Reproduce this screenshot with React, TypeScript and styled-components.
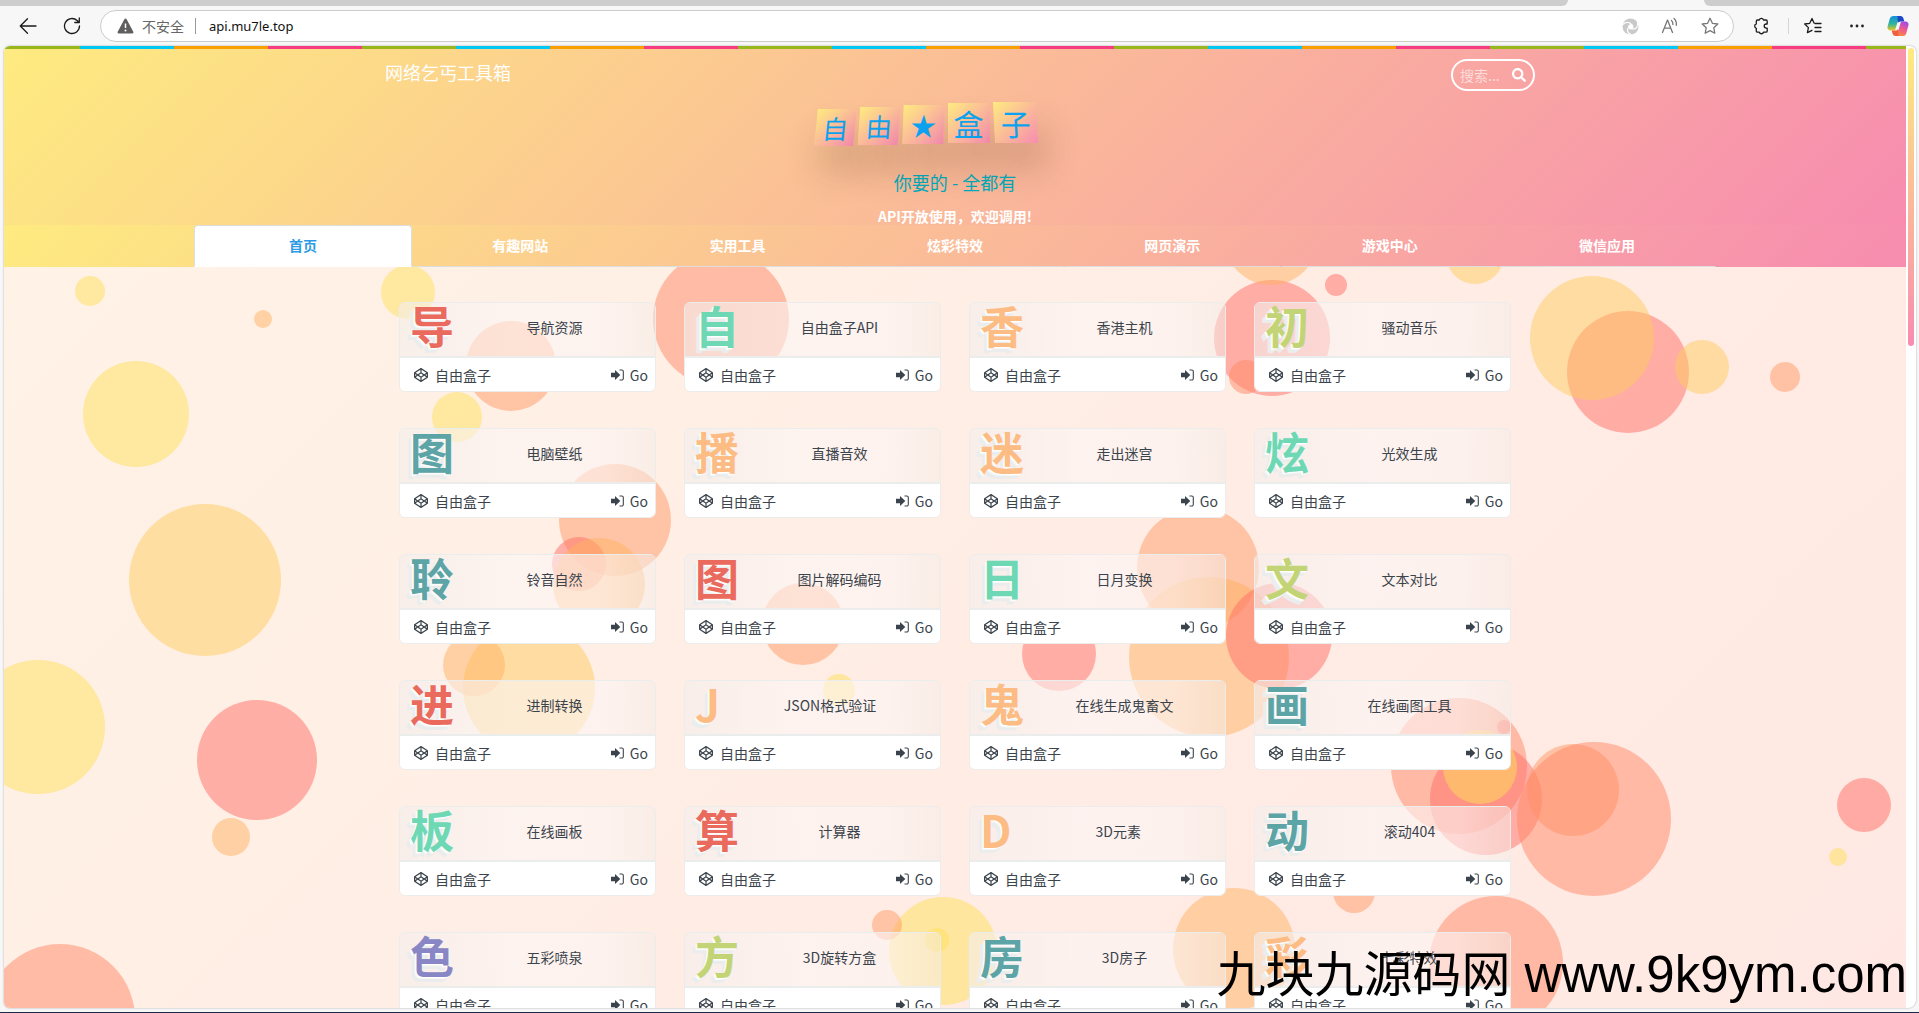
import React from "react";
import styled, { createGlobalStyle, css } from "styled-components";
import { FaSearch, FaCodepen } from "react-icons/fa";

const SANS = `"Noto Sans CJK SC", "Noto Sans", sans-serif`;
const warm = css`
  background: linear-gradient(135deg, #feeb80 0%, #f78cb0 100%);
`;

const Global = createGlobalStyle`
  *, *::before, *::after { box-sizing: border-box; }
  html, body, #root { height: 100%; }
  body { margin: 0; overflow: hidden; font-family: ${SANS}; font-size: 14px; }
  button, input { font: inherit; color: inherit; }
  a { color: inherit; text-decoration: none; }
`;

const Window = styled.div`
  height: 100vh;
  display: flex;
  flex-direction: column;
  background: #f7f7f7;
  border-bottom: 1px solid #1b2a4a;
`;

/* Browser frame */
const TabStrip = styled.div`
  flex: none;
  height: 6px;
  display: flex;
  justify-content: space-between;
`;
const InactiveTabs = styled.div<{ $side: "left" | "right" }>`
  background: #cdcdcd;
  ${(p) =>
    p.$side === "left"
      ? css`flex: 1; margin-right: 136px; border-bottom-right-radius: 6px;`
      : css`width: 215px; border-bottom-left-radius: 6px;`}
`;
const Toolbar = styled.div`
  flex: none;
  height: 40px;
  display: flex;
  align-items: center;
  padding: 0 0 0 12px;
  color: #1b1b1b;
`;
const ToolButton = styled.button<{ $w?: number }>`
  width: ${(p) => p.$w ?? 44}px;
  height: 32px;
  padding: 0;
  border: 0;
  background: none;
  display: flex;
  align-items: center;
  justify-content: center;
  flex: none;
`;
const AddressBar = styled.div`
  flex: 1;
  height: 32px;
  display: flex;
  align-items: center;
  padding: 0 3px 0 16px;
  background: #fff;
  border: 1px solid #ccc;
  border-radius: 16px;
  color: #666;
`;
const Insecure = styled.span`
  margin-left: 8px;
  padding-right: 11px;
  border-right: 1px solid #999;
  line-height: 16px;
`;
const Url = styled.input`
  flex: 1;
  min-width: 0;
  border: 0;
  outline: 0;
  margin-left: 11px;
  color: #111;
  background: none;
  font-family: "Noto Sans", ${SANS};
  font-size: 13px;
`;
const Divider = styled.span`
  width: 1px;
  height: 16px;
  background: #d5d5d5;
`;

/* Page */
const Viewport = styled.div`
  flex: 1;
  min-height: 0;
  display: flex;
  margin: 0 3px 4px 4px;
  background: #fff;
  border-radius: 6px 6px 8px 6px;
  overflow: hidden;
  box-shadow: 0 0 2px rgba(0, 0, 0, 0.35);
`;
const Page = styled.div`
  flex: 1;
  min-width: 0;
  position: relative;
  overflow: hidden;
  background: linear-gradient(135deg, #fff3e6 0%, #ffe8e3 100%);
`;
const Scrollbar = styled.div`
  width: 10px;
  padding: 2px 2px 0;
`;
const Thumb = styled.div`
  height: 298px;
  border-radius: 3px;
  background: linear-gradient(180deg, #feeb80, #f78cb0);
`;
const Backdrop = styled.svg`
  position: absolute;
  inset: 0;
  width: 100%;
  height: 100%;
`;
const Content = styled.div`
  position: relative;
`;
const Stripe = styled.div`
  height: 3px;
  background: linear-gradient(
      90deg,
      #97b71c 0 94px,
      #00c8f4 94px 188px,
      #f9a000 188px 282px,
      #f73c82 282px 376px
    )
    -18px 0 / 376px 3px;
`;
const Header = styled.header`
  ${warm}
  height: 176px;
`;
const HeaderTop = styled.div`
  max-width: 1160px;
  margin: 0 auto;
  padding-left: 10px;
  height: 42px;
  display: flex;
  justify-content: space-between;
  align-items: flex-end;
`;
const SiteName = styled.a`
  color: #fff;
  font-size: 18px;
  line-height: 38px;
`;
const SearchBox = styled.form`
  width: 84px;
  height: 32px;
  display: flex;
  align-items: center;
  justify-content: space-between;
  padding: 0 7px;
  border: 2px solid #fff;
  border-radius: 16px;
  color: #fff;
  input {
    width: 44px;
    padding: 0;
    border: 0;
    outline: 0;
    background: none;
  }
  input::placeholder { color: rgba(255, 255, 255, 0.6); opacity: 1; }
  button { border: 0; padding: 0; background: none; display: flex; }
`;
const Hero = styled.div`
  display: flex;
  flex-direction: column;
  align-items: center;
`;
const Logo = styled.div`
  height: 62px;
  padding: 11px 58px 0 0;
  display: flex;
  gap: 4px;
`;
const Tile = styled.span<{ $size: number; $font: number; $lean: number; $drop: number }>`
  width: ${(p) => p.$size + 2}px;
  height: ${(p) => p.$size}px;
  display: flex;
  align-items: center;
  justify-content: center;
  transform: translateY(${(p) => p.$drop}px) skewX(${(p) => p.$lean}deg);
  ${warm}
  box-shadow: 8px 26px 36px rgba(60, 30, 0, 0.2);
  color: #0ca2ee;
  font-size: ${(p) => p.$font}px;
  line-height: 1;
`;
const Slogan = styled.p`
  margin: 13px 0 0;
  color: #00acbe;
  font-size: 18px;
  line-height: 32px;
`;
const Notice = styled.p`
  margin: 8px 0 0;
  color: #fff;
  font-weight: 700;
  line-height: 20px;
`;
const Nav = styled.nav`
  ${warm}
  height: 42px;
  display: flex;
  justify-content: center;
`;
const NavLink = styled.a<{ $active?: boolean }>`
  width: calc(80% / 7);
  border: 1px solid transparent;
  border-bottom-color: #ddd;
  color: #fff;
  font-weight: 700;
  line-height: 38px;
  text-align: center;
  ${(p) =>
    p.$active &&
    css`
      background: #fff;
      color: #2c9be4;
      border-color: #ddd #ddd #fff;
      border-radius: 4px 4px 0 0;
    `}
`;
const Grid = styled.main`
  max-width: 1140px;
  margin: 0 auto;
  padding: 35px 14px 0;
  display: grid;
  grid-template-columns: repeat(4, 1fr);
  gap: 36px 28px;
`;
const Card = styled.a`
  height: 90px;
  display: flex;
  flex-direction: column;
  border: 1px solid #ebeded;
  border-radius: 6px;
  color: #3b444c;
`;
const CardHead = styled.div`
  flex: 1;
  display: flex;
  align-items: center;
  padding: 0 0 5px 10px;
  border-bottom: 2px solid #ebeded;
  border-radius: 5px 5px 0 0;
  background: linear-gradient(
    90deg,
    rgba(244, 238, 236, 0.6),
    rgba(252, 246, 246, 0.6) 45%,
    rgba(252, 245, 244, 0.6) 80%,
    rgba(244, 236, 232, 0.5)
  );
`;
const Initial = styled.b<{ $color: string }>`
  padding-bottom: 4px;
  color: ${(p) => p.$color};
  font-size: 44px;
  line-height: 44px;
  text-shadow: -1px 1px 0 #fff, -2px 2px 0 #f7f7f7, -4px 4px 0 #ebeded, -5px 5px 0 #ebeded;
`;
const CardTitle = styled.span`
  flex: 1;
  text-align: center;
`;
const CardFoot = styled.div`
  height: 33px;
  display: flex;
  align-items: center;
  gap: 7px;
  padding: 0 7px 0 14px;
  border-radius: 0 0 5px 5px;
  background: #fff;
`;
const Go = styled.span`
  margin-left: auto;
  display: flex;
  align-items: center;
  gap: 6px;
`;
const Watermark = styled.div`
  position: absolute;
  right: 12px;
  bottom: 2px;
  display: flex;
  align-items: baseline;
  gap: 14px;
  color: #000;
  font-size: 49px;
  line-height: 72px;
  white-space: nowrap;
  span + span {
    font-family: "Liberation Sans", Arial, sans-serif;
    font-size: 51px;
  }
`;

const RED = "#ff6e66", CORAL = "#ff8766", PEACH = "#ff9966", ORANGE = "#ffb262", AMBER = "#ffcb60", YELLOW = "#ffe05a";
const bubbles: [number, number, number, string][] = [
  [86, 245, 15, YELLOW], [259, 273, 9, ORANGE], [404, 246, 27, YELLOW], [132, 368, 53, YELLOW],
  [201, 534, 76, AMBER], [34, 681, 67, YELLOW], [253, 714, 60, RED], [227, 791, 19, ORANGE],
  [56, 973, 75, CORAL], [507, 320, 45, PEACH], [453, 371, 25, YELLOW], [717, 273, 68, CORAL],
  [611, 474, 56, PEACH], [575, 518, 27, RED], [595, 538, 46, ORANGE], [525, 642, 66, AMBER],
  [470, 619, 31, ORANGE], [799, 578, 41, PEACH], [835, 644, 16, YELLOW], [1268, 292, 58, RED],
  [1242, 331, 17, CORAL], [1267, 192, 47, ORANGE], [1332, 239, 11, RED], [1471, 209, 29, AMBER],
  [1624, 326, 61, RED], [1588, 292, 62, AMBER], [1698, 321, 27, AMBER], [1781, 331, 15, PEACH],
  [1194, 522, 61, PEACH], [1205, 611, 80, ORANGE], [1275, 590, 53, RED], [1055, 608, 37, RED],
  [1455, 720, 68, CORAL], [1482, 753, 56, RED], [1476, 721, 37, YELLOW], [1569, 744, 46, PEACH],
  [1590, 773, 77, CORAL], [1860, 759, 27, RED], [1834, 811, 9, YELLOW], [1500, 681, 7, RED],
  [939, 905, 54, YELLOW], [883, 879, 15, PEACH], [933, 894, 12, YELLOW], [1230, 903, 61, ORANGE],
  [1350, 846, 21, PEACH], [1492, 917, 67, CORAL],
];

const nav = ["首页", "有趣网站", "实用工具", "炫彩特效", "网页演示", "游戏中心", "微信应用"];

const tiles = [
  { ch: "自", size: 37, font: 26, lean: -6, drop: 7 },
  { ch: "由", size: 38, font: 26, lean: -4, drop: 5 },
  { ch: "★", size: 39, font: 26, lean: -2, drop: 3 },
  { ch: "盒", size: 40, font: 30, lean: 0, drop: 1 },
  { ch: "子", size: 41, font: 30, lean: 3, drop: 0 },
];

const C = { red: "#ea6a5d", green: "#6ed8b5", orange: "#fdbc83", lime: "#c3d477", teal: "#5da4a6", purple: "#8886c4" };
const cards: [string, string, string][] = [
  ["导", "导航资源", C.red], ["自", "自由盒子API", C.green], ["香", "香港主机", C.orange], ["初", "骚动音乐", C.lime],
  ["图", "电脑壁纸", C.teal], ["播", "直播音效", C.orange], ["迷", "走出迷宫", C.orange], ["炫", "光效生成", C.green],
  ["聆", "铃音自然", C.teal], ["图", "图片解码编码", C.red], ["日", "日月变换", C.green], ["文", "文本对比", C.lime],
  ["进", "进制转换", C.red], ["J", "JSON格式验证", C.orange], ["鬼", "在线生成鬼畜文", C.orange], ["画", "在线画图工具", C.teal],
  ["板", "在线画板", C.green], ["算", "计算器", C.red], ["D", "3D元素", C.orange], ["动", "滚动404", C.teal],
  ["色", "五彩喷泉", C.purple], ["方", "3D旋转方盒", C.lime], ["房", "3D房子", C.teal], ["彩", "七彩特效", C.orange],
];

const stroke = { fill: "none", stroke: "currentColor", strokeWidth: 1.3, strokeLinecap: "round", strokeLinejoin: "round" } as const;

const BackIcon = () => (
  <svg width="18" height="18" viewBox="0 0 18 18" {...stroke}><path d="M17 9H1.500M8.500 1.800L1.300 9l7.200 7.200" /></svg>
);
const ReloadIcon = () => (
  <svg width="18" height="18" viewBox="0 0 18 18" {...stroke}><path d="M16.500 9a7.500 7.500 0 1 1-2.400-5.500l1.900 1.800M16.300 1v4.500h-4.500" /></svg>
);
const WarnIcon = () => (
  <svg width="17" height="16" viewBox="0 0 17 16"><path d="M8.500 0.500c.5 0 .9.300 1.100.7l6.700 12.600c.4.800-.1 1.700-1 1.700H1.700c-.9 0-1.400-.9-1-1.700L7.400 1.200c.2-.4.600-.7 1.100-.7z" fill="#5f5f5f" /><path d="M8.500 5.500v4.500" stroke="#fff" strokeWidth="1.500" /><circle cx="8.500" cy="12.500" r="1" fill="#fff" /></svg>
);
const SwirlIcon = () => (
  <svg width="17" height="17" viewBox="0 0 17 17"><circle cx="8.500" cy="8.500" r="8" fill="#c9c9c9" /><circle cx="8.800" cy="8.800" r="2.600" fill="#fff" /><g fill="none" stroke="#fff" strokeWidth="1.200" strokeLinecap="round"><path d="M0.500 7C3 3.500 7.500 3.500 10 6.800" /><path d="M15.500 4.500c1 4-1.500 7-5 6.500" /><path d="M9 16.500C5.500 15.500 4.500 12 6.500 9.500" /></g></svg>
);
const ReadAloudIcon = () => (
  <svg width="18" height="18" viewBox="0 0 18 18" {...stroke} stroke="#777"><path d="M1.500 15.500L6.500 3l5 12.500M3.200 11.200h6.600M10.500 3.500c1.200 1 1.500 2.500 1.400 4M13 1.500c2 1.700 2.600 4.200 2.300 6.800" /></svg>
);
const star = "M9 1.300l2.400 5 5.400.7-4 3.800 1 5.400L9 13.600l-4.800 2.600 1-5.400-4-3.800 5.400-.7z";
const StarIcon = () => (
  <svg width="18" height="18" viewBox="0 0 18 18" {...stroke} stroke="#777"><path d={star} /></svg>
);
const PuzzleIcon = () => (
  <svg width="18" height="18" viewBox="0 0 18 18" {...stroke}><path d="M5.500 3h1.800a2.200 2.200 0 0 1 4.200 0H14a1.200 1.200 0 0 1 1.200 1.200V7h-.9a2.100 2.100 0 0 0 0 4.200h.9V14a1.200 1.200 0 0 1-1.200 1.200h-2.500a2.200 2.200 0 0 1-4.200 0H5.500A1.200 1.200 0 0 1 4.300 14v-2.700a2.300 2.300 0 0 1 0-4.400V4.200A1.200 1.200 0 0 1 5.500 3z" /></svg>
);
const FavoritesIcon = () => (
  <svg width="18" height="18" viewBox="0 0 18 18" {...stroke}><path d="M10 6L8 1.500 5.700 6.300l-5 .7 3.700 3.600-1 5.100L8 13.300M11 6.500h6M11 10.500h6M11 14.500h6" /></svg>
);
const MoreIcon = () => (
  <svg width="16" height="16" viewBox="0 0 16 16"><g fill="#222"><circle cx="2.500" cy="8" r="1.400" /><circle cx="8" cy="8" r="1.400" /><circle cx="13.500" cy="8" r="1.400" /></g></svg>
);
const CopilotIcon = () => (
  <svg width="22" height="20" viewBox="0 0 22 20">
    <defs>
      <linearGradient id="cpA" x1="0" y1="0" x2="0" y2="1"><stop offset="0" stopColor="#1490df" /><stop offset=".55" stopColor="#2fb59b" /><stop offset="1" stopColor="#f2c61f" /></linearGradient>
      <linearGradient id="cpB" x1=".7" y1="0" x2=".3" y2="1"><stop offset="0" stopColor="#a04be8" /><stop offset=".5" stopColor="#ec5a90" /><stop offset="1" stopColor="#fb8a3c" /></linearGradient>
    </defs>
    <path d="M6 0h8l-1 3.500a3 3 0 0 0-2.300 2L8 14.500H3.500A3 3 0 0 1 .6 10.600L2.800 2.600A3.500 3.500 0 0 1 6 0z" fill="url(#cpA)" />
    <path d="M10.500 0h3a3 3 0 0 1 2.800 2l1 3.500h-3.800c-1.300 0-2.300.7-2.700 1.800z" fill="#1a46c8" />
    <path d="M16 20H8l1-3.500a3 3 0 0 0 2.300-2L14 5.500h4.500a3 3 0 0 1 2.900 3.900l-2.200 8A3.500 3.500 0 0 1 16 20z" fill="url(#cpB)" />
    <path d="M11.500 20h-3a3 3 0 0 1-2.800-2l-1-3.500h3.800c1.300 0 2.300-.7 2.700-1.800z" fill="#f0603c" />
  </svg>
);
const SignInIcon = () => (
  <svg width="13" height="12" viewBox="0 0 13 12"><path d="M0 3.800h4V1l5.300 5L4 11V8.200H0z" fill="currentColor" /><path d="M8.500 1h2.300a1.500 1.500 0 0 1 1.500 1.500v7a1.500 1.500 0 0 1-1.500 1.500H8.500" fill="none" stroke="currentColor" strokeWidth="1.100" /></svg>
);

export default function App() {
  return (
    <Window>
      <Global />
      <TabStrip>
        <InactiveTabs $side="left" />
        <InactiveTabs $side="right" />
      </TabStrip>
      <Toolbar>
        <ToolButton $w={32} aria-label="返回"><BackIcon /></ToolButton>
        <ToolButton $w={56} aria-label="刷新"><ReloadIcon /></ToolButton>
        <AddressBar>
          <WarnIcon />
          <Insecure>不安全</Insecure>
          <Url aria-label="地址" defaultValue="api.mu7le.top" />
          <ToolButton $w={40} aria-label="翻译"><SwirlIcon /></ToolButton>
          <ToolButton $w={40} aria-label="朗读"><ReadAloudIcon /></ToolButton>
          <ToolButton $w={40} aria-label="收藏"><StarIcon /></ToolButton>
        </AddressBar>
        <ToolButton $w={54} aria-label="扩展"><PuzzleIcon /></ToolButton>
        <Divider />
        <ToolButton $w={48} aria-label="收藏夹"><FavoritesIcon /></ToolButton>
        <ToolButton $w={40} aria-label="更多"><MoreIcon /></ToolButton>
        <ToolButton $w={42} aria-label="Copilot"><CopilotIcon /></ToolButton>
      </Toolbar>
      <Viewport>
        <Page>
          <Backdrop viewBox="0 0 1902 962" preserveAspectRatio="xMidYMin slice" aria-hidden="true">
            {bubbles.map(([x, y, r, fill]) => (
              <circle key={`${x}-${y}`} cx={x} cy={y} r={r} fill={fill} fillOpacity={0.5} />
            ))}
          </Backdrop>
          <Content>
            <Stripe />
            <Header>
              <HeaderTop>
                <SiteName href="#">网络乞丐工具箱</SiteName>
                <SearchBox role="search">
                  <input aria-label="搜索" placeholder="搜索..." />
                  <button type="button" aria-label="开始搜索"><FaSearch size={14} /></button>
                </SearchBox>
              </HeaderTop>
              <Hero>
                <Logo>
                  {tiles.map((t) => (
                    <Tile key={t.ch} $size={t.size} $font={t.font} $lean={t.lean} $drop={t.drop}>{t.ch}</Tile>
                  ))}
                </Logo>
                <Slogan>你要的 - 全都有</Slogan>
                <Notice>API开放使用，欢迎调用!</Notice>
              </Hero>
            </Header>
            <Nav>
              {nav.map((n, i) => (
                <NavLink key={n} href="#" $active={i === 0}>{n}</NavLink>
              ))}
            </Nav>
            <Grid>
              {cards.map(([initial, title, color]) => (
                <Card key={title} href="#">
                  <CardHead>
                    <Initial $color={color}>{initial}</Initial>
                    <CardTitle>{title}</CardTitle>
                  </CardHead>
                  <CardFoot>
                    <FaCodepen size={14} />
                    <span>自由盒子</span>
                    <Go><SignInIcon />Go</Go>
                  </CardFoot>
                </Card>
              ))}
            </Grid>
          </Content>
        </Page>
        <Scrollbar><Thumb /></Scrollbar>
      </Viewport>
      <Watermark><span>九块九源码网</span><span>www.9k9ym.com</span></Watermark>
    </Window>
  );
}
